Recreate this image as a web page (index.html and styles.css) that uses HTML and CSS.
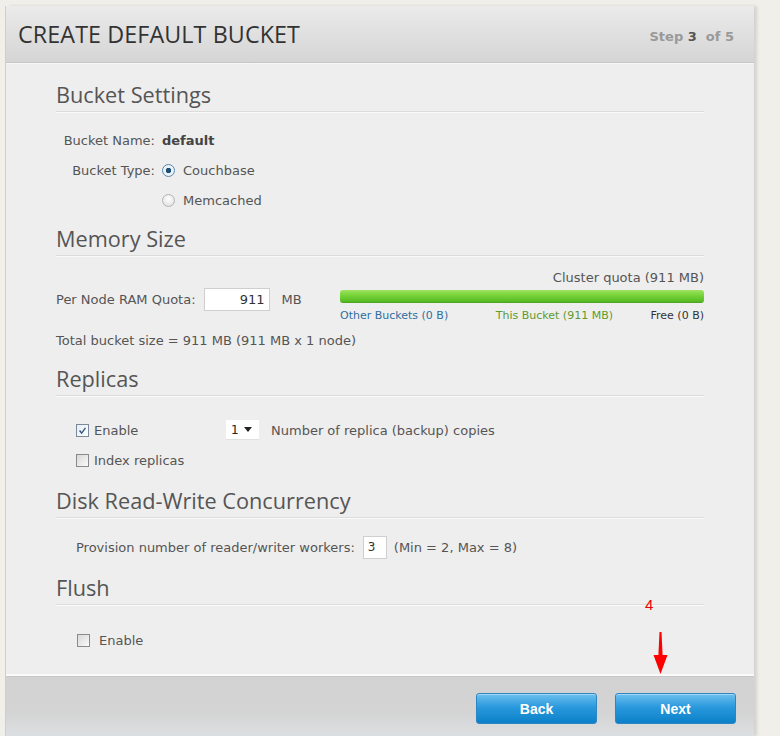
FILE: index.html
```html
<!DOCTYPE html>
<html>
<head>
<meta charset="utf-8">
<link rel="stylesheet" href="styles.css">
</head>
<body>
<div class="page">
  <div class="panel">
    <div class="header">
      <h1 class="title">CREATE DEFAULT BUCKET</h1>
      <div class="step">Step <b>3</b> &nbsp;of 5</div>
    </div>
    <div class="content">
      <section class="sec sec-bucket">
        <h2 class="sec-title">Bucket Settings</h2>
        <div class="form-grid">
          <div class="lbl">Bucket Name:</div>
          <div class="val"><b class="strong">default</b></div>
          <div class="lbl">Bucket Type:</div>
          <div class="val"><span class="radio on"></span>Couchbase</div>
          <div class="lbl"></div>
          <div class="val"><span class="radio"></span>Memcached</div>
        </div>
      </section>

      <section class="sec sec-mem">
        <h2 class="sec-title">Memory Size</h2>
        <div class="mem-row">
          <div class="quota">
            <span>Per Node RAM Quota:</span>
            <span class="textbox quota-box">911</span>
            <span>MB</span>
          </div>
          <div class="bar-block">
            <div class="cluster">Cluster quota (911 MB)</div>
            <div class="bar"></div>
            <div class="bar-labels">
              <span class="l-other">Other Buckets (0 B)</span>
              <span class="l-this">This Bucket (911 MB)</span>
              <span class="l-free">Free (0 B)</span>
            </div>
          </div>
        </div>
        <div class="total">Total bucket size = 911 MB (911 MB x 1 node)</div>
      </section>

      <section class="sec sec-rep">
        <h2 class="sec-title">Replicas</h2>
        <div class="rep-row">
          <label class="check-lbl enable-col"><span class="check on"><svg viewBox="0 0 13 13" width="13" height="13"><path d="M3 6.5 L5.5 9.5 L10 3.5" fill="none" stroke="#33567a" stroke-width="1.6"/></svg></span>Enable</label>
          <span class="select">1 <svg class="caret" viewBox="0 0 8 5" width="8" height="5"><path d="M0 0 H8 L4 5 Z" fill="#222"/></svg></span>
          <span>Number of replica (backup) copies</span>
        </div>
        <div class="rep-row">
          <label class="check-lbl"><span class="check"></span>Index replicas</label>
        </div>
      </section>

      <section class="sec sec-disk">
        <h2 class="sec-title">Disk Read-Write Concurrency</h2>
        <div class="disk-row">
          <span>Provision number of reader/writer workers:</span>
          <span class="textbox worker-box">3</span>
          <span>(Min = 2, Max = 8)</span>
        </div>
      </section>

      <section class="sec sec-flush">
        <h2 class="sec-title">Flush</h2>
        <div class="flush-row">
          <label class="check-lbl wide"><span class="check"></span>Enable</label>
        </div>
      </section>
    </div>
    <div class="footer">
      <button class="btn">Back</button>
      <button class="btn">Next</button>
    </div>
    <div class="annot">
      <span class="annot-num">4</span>
      <svg class="annot-arrow" viewBox="0 0 15 42" width="15" height="42"><path d="M6.5 0 L8.5 0 L9.6 23 L14.5 23 L7.5 42 L0.5 23 L5.4 23 Z" fill="#f00"/></svg>
    </div>
  </div>
</div>
</body>
</html>
```

FILE: styles.css
```css
html, body {
  margin: 0;
  padding: 0;
}
body {
  background: #efede9;
  font-family: "DejaVu Sans", Verdana, sans-serif;
  font-size: 13px;
  color: #555;
  width: 780px;
  height: 736px;
  overflow: hidden;
}
.page {
  padding: 6px 26px 0 6px;
  background: #f0efea;
}
.panel {
  position: relative;
  height: 730px;
  display: flex;
  flex-direction: column;
  background: #eeeeee;
  box-shadow: 3px 0 3px rgba(0, 0, 0, 0.12), -1px 0 0 #cfcfc8;
}
.header {
  height: 57px;
  box-sizing: border-box;
  border-bottom: 1px solid #c6c6c6;
  background: linear-gradient(#ebebeb, #d5d5d5);
  display: flex;
  align-items: center;
  justify-content: space-between;
  padding: 0 20px 0 12px;
}
.title {
  margin: 0;
  font-family: "Open Sans", sans-serif;
  font-weight: 400;
  font-size: 23.3px;
  color: #333;
  letter-spacing: 0.1px;
}
.step {
  font-weight: bold;
  font-size: 13px;
  color: #999;
  padding-top: 4px;
}
.step b {
  color: #555;
}
.content {
  flex: 1;
  padding: 0 50px;
  border-top: 1px solid #f7f7f7;
}
.sec-title {
  margin: 0;
  font-family: "Open Sans", sans-serif;
  font-weight: 400;
  font-size: 21.7px;
  color: #555;
  line-height: 28px;
  padding-bottom: 2px;
  border-bottom: 1px solid #dcdcdc;
  box-shadow: 0 1px 0 #fafafa;
}
.sec-bucket { padding-top: 17px; }
.form-grid {
  display: grid;
  grid-template-columns: 99px 1fr;
  column-gap: 7px;
  grid-auto-rows: 30px;
  align-items: center;
  margin-top: 13px;
}
.lbl { text-align: right; }
.val { display: flex; align-items: center; }
.strong { color: #444; }
.radio {
  width: 11px;
  height: 11px;
  border-radius: 50%;
  border: 1px solid #b4b4b4;
  background: radial-gradient(circle at 50% 35%, #fff, #dcdcdc);
  margin-right: 8px;
  box-sizing: content-box;
  display: inline-block;
}
.radio.on {
  border-color: #5c86a8;
  background: radial-gradient(circle, #1f4e73 0 2.5px, #e8f2fa 3px);
}
.sec-mem { padding-top: 10px; }
.mem-row {
  display: flex;
  justify-content: space-between;
  align-items: flex-end;
  margin-top: 14px;
}
.quota {
  display: flex;
  align-items: center;
  gap: 12px;
  margin-bottom: 12px;
}
.quota .quota-box { margin-left: -4px; }
.textbox {
  background: #fff;
  border: 1px solid #cfcfcf;
  box-sizing: border-box;
  height: 23px;
  display: flex;
  align-items: center;
  justify-content: flex-end;
  color: #333;
  font-family: "DejaVu Sans", sans-serif;
  font-size: 13px;
}
.quota-box { width: 66px; padding-right: 4px; }
.bar-block { width: 364px; }
.cluster {
  text-align: right;
  line-height: 16px;
  margin-bottom: 4px;
}
.bar {
  height: 13px;
  border-radius: 3px;
  background: linear-gradient(#a0e362, #78d43a 40%, #5bbd26 85%, #4a9e1e);
}
.bar-labels {
  display: flex;
  justify-content: space-between;
  font-size: 11px;
  line-height: 14px;
  margin-top: 6px;
}
.l-other { color: #2e6f9e; }
.l-this { color: #5f9b2c; margin-left: 10px; }
.l-free { color: #333; }
.total {
  line-height: 16px;
  margin-top: 10px;
}
.sec-rep { padding-top: 16px; }
.rep-row {
  display: flex;
  align-items: center;
  height: 30px;
  padding-left: 20px;
}
.sec-rep .rep-row:first-of-type { margin-top: 19px; }
.check-lbl {
  display: flex;
  align-items: center;
}
.enable-col { width: 150px; }
.check {
  width: 11px;
  height: 11px;
  border: 1px solid #8a8a8a;
  background: linear-gradient(135deg, #d8d8d8, #fafafa);
  margin-right: 5px;
  display: inline-flex;
  align-items: center;
  justify-content: center;
  box-sizing: content-box;
}
.check svg { width: 11px; height: 11px; }
.check.on { background: linear-gradient(135deg, #e4ecf4, #fff); border-color: #7a8a9a; }
.select {
  width: 33px;
  height: 20px;
  background: #fff;
  box-sizing: border-box;
  border-bottom: 1px solid #e0e0e0;
  display: flex;
  align-items: center;
  justify-content: space-between;
  padding: 0 7px 0 5px;
  margin-right: 12px;
  color: #222;
  font-size: 12px;
}
.sec-disk { padding-top: 12px; }
.disk-row {
  display: flex;
  align-items: center;
  padding-left: 20px;
  margin-top: 17px;
  height: 24px;
}
.worker-box {
  width: 24px;
  margin: 0 7px 0 8px;
  justify-content: flex-start;
  padding-left: 4px;
  font-size: 12px;
}
.sec-flush { padding-top: 15px; }
.flush-row {
  display: flex;
  align-items: center;
  height: 30px;
  padding-left: 21px;
  margin-top: 20px;
}
.wide .check { margin-right: 9px; }
.footer {
  height: 60px;
  box-sizing: border-box;
  border-top: 1px solid #c8c8c8;
  box-shadow: 0 -2px 0 #fafafa;
  background: linear-gradient(#d2d2d2, #d4d4d4 60%, #dcdfe2);
  display: flex;
  justify-content: flex-end;
  align-items: flex-start;
  gap: 18px;
  padding: 16px 18px 0 0;
}
.btn {
  width: 121px;
  height: 31px;
  border: 1px solid #2d86c2;
  border-radius: 3px;
  background: linear-gradient(#6cc0ee, #2a99dd 45%, #0b80c8);
  color: #fff;
  font-family: "Liberation Sans", Arial, sans-serif;
  font-weight: bold;
  font-size: 14px;
  box-shadow: inset 0 1px 0 rgba(255,255,255,0.4);
}
.annot {
  position: absolute;
  left: 638px;
  top: 590px;
  width: 30px;
  height: 80px;
}
.annot-num {
  position: absolute;
  left: 1px;
  top: 0;
  color: #e00;
  font-family: "Liberation Sans", Arial, sans-serif;
  font-size: 15px;
}
.annot-arrow {
  position: absolute;
  left: 8.5px;
  top: 36px;
}
```
